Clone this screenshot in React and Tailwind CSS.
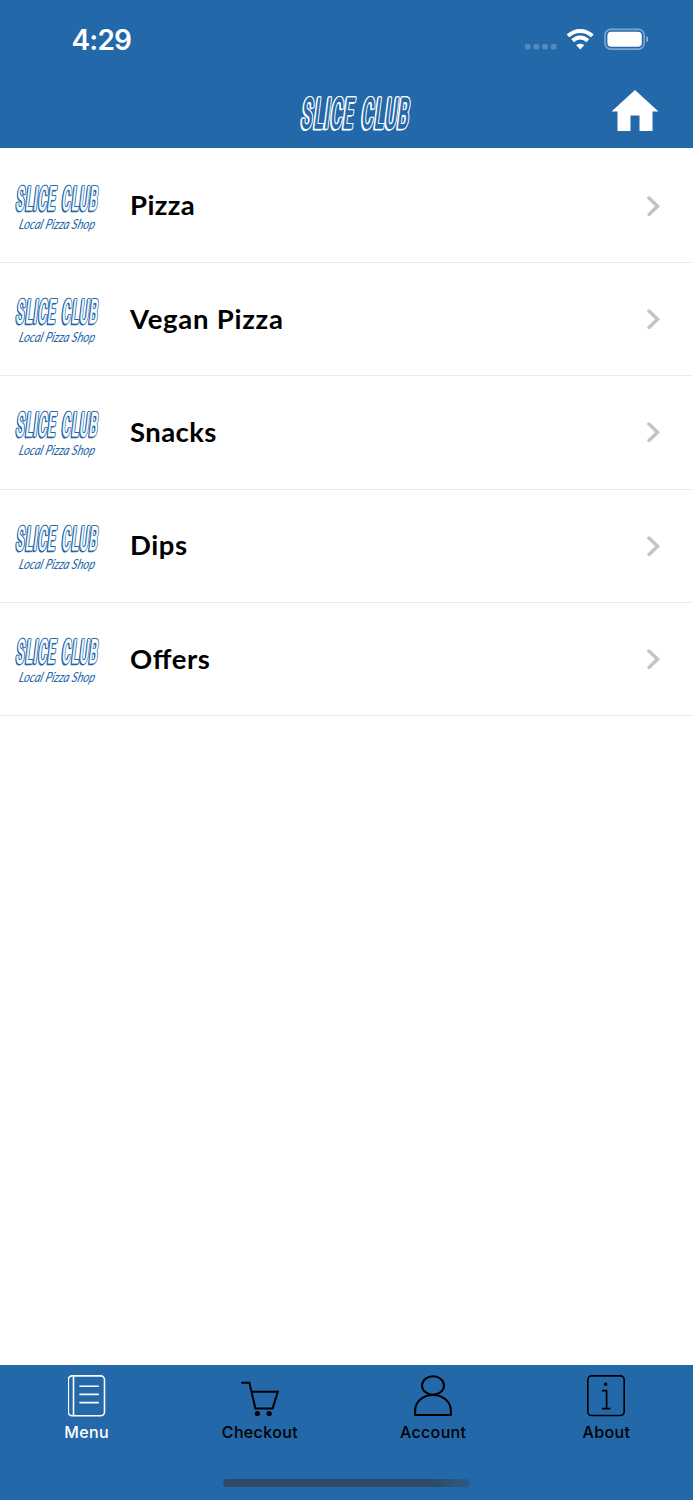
import React from "react";

const items = [
  { name: "Pizza", style: "tracking-[0.4px]" },
  { name: "Vegan Pizza", style: "tracking-[0.75px]" },
  { name: "Snacks", style: "tracking-[0.4px]" },
  { name: "Dips", style: "tracking-[0.6px]" },
  { name: "Offers", style: "tracking-[0.6px] [font-feature-settings:'liga']" },
];

// condensed letters, each one placed by its left edge
const letters = [
  ["S", 4.5], ["L", 17], ["I", 27.5], ["C", 33.5], ["E", 46],
  ["C", 64.5], ["L", 77.5], ["U", 88], ["B", 100.5],
];

const LogoWords = ({ dx = 0, dy = 0, color, strokeWidth }) => (
  <g
    transform={`translate(${dx} ${dy}) skewX(-7)`}
    fontFamily="Roboto, sans-serif"
    fontSize="42"
    fill={color}
    stroke={color}
    strokeWidth={strokeWidth}
    strokeLinejoin="round"
  >
    {letters.map(([letter, x]) => (
      <text key={x} transform={`translate(${x} 32.5) scale(0.42 1)`}>{letter}</text>
    ))}
  </g>
);

const Wordmark = ({ className, ink, paper }) => (
  <svg viewBox="0 0 112 37" preserveAspectRatio="none" className={className}>
    <LogoWords dx={-1} dy={1.2} color={ink} strokeWidth="3.2" />
    <LogoWords dx={-0.4} dy={0} color={ink} strokeWidth="3.6" />
    <LogoWords dx={0.8} dy={0} color={ink} strokeWidth="3.6" />
    <LogoWords dx={0.3} dy={0} color={paper} strokeWidth="1.4" />
  </svg>
);

const ShopLogo = () => (
  <div className="w-[85px] shrink-0 pt-[9px]">
    <Wordmark className="block h-[29px] w-[85px] overflow-visible" ink="#1c66a8" paper="#ffffff" />
    <svg viewBox="0 0 85 22" className="block h-[22px] w-[85px] overflow-visible">
      <text
        x="7"
        y="15"
        transform="skewX(-14)"
        textLength="76"
        lengthAdjust="spacingAndGlyphs"
        fontFamily="Lato, sans-serif"
        fontStyle="italic"
        fontSize="14"
        fill="#1c66a8"
      >
        Local Pizza Shop
      </text>
    </svg>
  </div>
);

const StatusIcons = () => (
  <svg viewBox="0 0 128 26" className="h-[26px] w-[128px]">
    <g fill="#ffffff" fillOpacity="0.22">
      <rect x="4.8" y="16" width="5.8" height="5.6" rx="1.7" />
      <rect x="13.5" y="16" width="5.8" height="5.6" rx="1.7" />
      <rect x="22.1" y="16" width="5.8" height="5.6" rx="1.7" />
      <rect x="30.8" y="16" width="5.8" height="5.6" rx="1.7" />
    </g>
    <g fill="none" stroke="#ffffff" strokeWidth="4">
      <path d="M48 7.9 C55 1.2 65.4 1.2 72.4 7.9" />
      <path d="M52.6 12.8 C57 8.5 63.4 8.5 67.8 12.8" />
    </g>
    <path d="M60.2 21.6 L56.2 17.3 C58.3 15.3 62.1 15.3 64.2 17.3 Z" fill="#ffffff" />
    <rect x="85" y="1.4" width="39.2" height="19.7" rx="5.8" fill="none" stroke="#ffffff" strokeOpacity="0.42" strokeWidth="1.6" />
    <rect x="87.4" y="3.8" width="34.4" height="14.9" rx="3.8" fill="#ffffff" />
    <path d="M126.3 8.1 C129.4 9.3 129.4 13 126.3 14.2 Z" fill="#ffffff" fillOpacity="0.5" />
  </svg>
);

const HomeIcon = () => (
  <svg viewBox="0 0 48 42" className="h-[42px] w-[48px]" fill="#ffffff">
    <path d="M24 0 L47.5 21.5 H41.5 V41 H28.5 V25.5 H19.5 V41 H6.5 V21.5 H.5 Z" />
  </svg>
);

const MenuIcon = () => (
  <svg viewBox="0 0 38 42" className="h-[42px] w-[38px]" fill="none" stroke="currentColor" strokeWidth="1.6">
    <rect x=".3" y=".9" width="36.2" height="39.8" rx="3.8" className="overflow-visible" />
    <path d="M5.5 1 V40.6 M11.4 11.2 H30.8 M11.4 19.4 H30.8 M11.4 27.6 H30.8" />
  </svg>
);

const CartIcon = () => (
  <svg viewBox="0 0 38 42" className="h-[42px] w-[38px]" fill="none" stroke="currentColor" strokeWidth="2">
    <path d="M.3 7.7 H8.4 L14.4 33.4 H31.6 L36.8 16.8 H10.8" />
    <circle cx="16.4" cy="38.6" r="2.6" fill="currentColor" stroke="none" />
    <circle cx="28.2" cy="38.6" r="2.6" fill="currentColor" stroke="none" />
  </svg>
);

const AccountIcon = () => (
  <svg viewBox="0 0 38 42" className="h-[42px] w-[38px]" fill="none" stroke="currentColor" strokeWidth="2">
    <ellipse cx="19" cy="10.5" rx="11" ry="9.3" />
    <path d="M1.1 40.1 V36 C1.1 26.5 8.8 19.9 19 19.9 S36.9 26.5 36.9 36 V40.1 Z" />
  </svg>
);

const AboutIcon = () => (
  <svg viewBox="0 0 38 42" className="h-[42px] w-[38px]" fill="none" stroke="currentColor" strokeWidth="1.6">
    <rect x=".8" y=".9" width="36.4" height="39.6" rx="3.8" />
    <path d="M14.9 15.6 H19.6 V33.6 M14.9 33.6 H23.4" />
    <circle cx="18.6" cy="9.2" r="1.7" fill="currentColor" stroke="none" />
  </svg>
);

const tabs = [
  { label: "Menu", Icon: MenuIcon, color: "text-white" },
  { label: "Checkout", Icon: CartIcon, color: "text-black" },
  { label: "Account", Icon: AccountIcon, color: "text-black" },
  { label: "About", Icon: AboutIcon, color: "text-black" },
];

const App = () => {
  return (
    <div className="flex h-[1500px] w-[693px] flex-col overflow-hidden bg-white">
      <header className="h-[147.5px] shrink-0 bg-[#2368a8]">
        <div className="flex h-[80px] items-start justify-between pt-[22px] pr-[45px] pl-[71.5px]">
          <span className="font-[Inter,sans-serif] text-[28px] leading-[36px] font-semibold tracking-[-0.8px] text-white">
            4:29
          </span>
          <div className="pt-[5.5px]">
            <StatusIcons />
          </div>
        </div>
        <div className="grid grid-cols-[1fr_112px_1fr] items-start pt-[10px] pl-[18px]">
          <div />
          <Wordmark className="mt-[5px] block h-[37px] w-[112px] overflow-visible" ink="#ffffff" paper="#2368a8" />
          <div className="flex justify-end pr-[34.5px]">
            <HomeIcon />
          </div>
        </div>
      </header>

      <main className="flex-1 pt-[2px]">
        {items.map((item) => (
          <div key={item.name} className="flex h-[113.35px] items-center border-b border-[#ebebeb] pr-[33.5px] pl-[14.5px]">
            <ShopLogo />
            <span className={`-mt-[1px] ml-[30.5px] flex-1 font-[Lato,sans-serif] text-[27.5px] leading-[34px] font-bold text-black ${item.style}`}>
              {item.name}
            </span>
            <svg viewBox="0 0 14 20" className="h-[20px] w-[14px]" fill="none" stroke="#c4c4c7" strokeWidth="3.5" strokeLinecap="round">
              <path d="M3 2 L11.5 10.2 L3 18.4" />
            </svg>
          </div>
        ))}
      </main>

      <footer className="flex h-[135px] shrink-0 flex-col bg-[#2368a8]">
        <nav className="grid grid-cols-4">
          {tabs.map(({ label, Icon, color }) => (
            <div key={label} className={`flex flex-col items-center pt-[10px] ${color}`}>
              <Icon />
              <span className="mt-[5px] font-[Inter,sans-serif] text-[16px] leading-[20px] font-medium tracking-[0.35px]">
                {label}
              </span>
            </div>
          ))}
        </nav>
        <div className="mt-auto mb-[13px] ml-[223px] h-[8px] w-[247px] rounded-full bg-linear-to-r from-[#2f4a64] from-85% to-[#2d5a86]" />
      </footer>
    </div>
  );
};

export default App;
